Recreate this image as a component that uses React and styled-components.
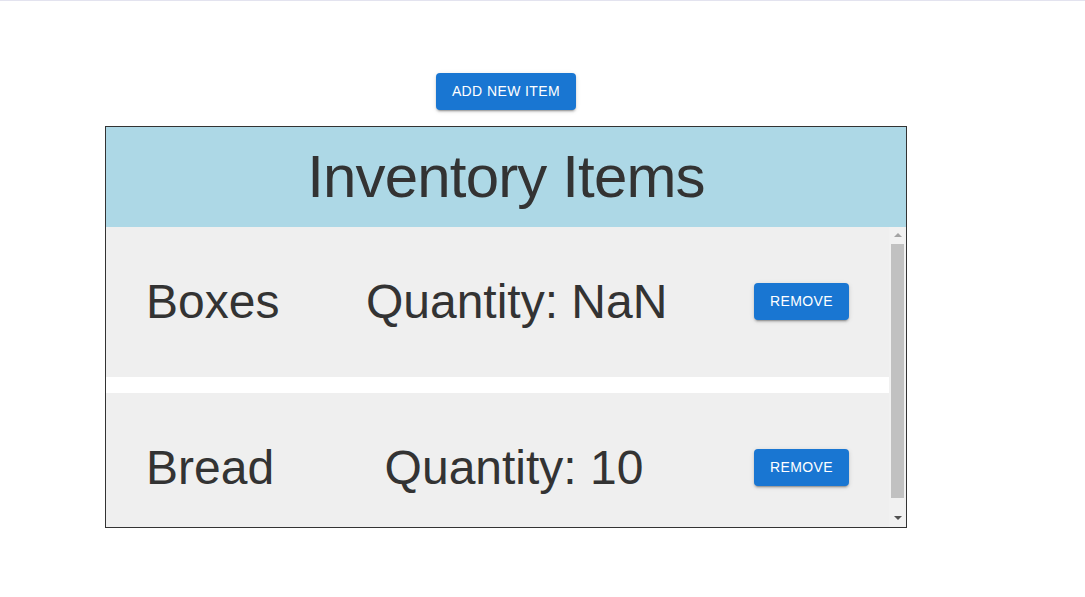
import React from 'react';
import styled, { createGlobalStyle } from 'styled-components';

const GlobalStyle = createGlobalStyle`
	body {
		margin: 0;
		background: #fff;
		font-family: "Liberation Sans", Arial, sans-serif;
	}
`;

const Page = styled.div`
	border-top: 1px solid #e3e3ef;
	padding-top: 72px;
	min-height: 596px;
	box-sizing: border-box;
`;

const Column = styled.div`
	width: 802px;
	margin-left: 105px;
	display: flex;
	flex-direction: column;
	align-items: center;
`;

const Button = styled.button`
	background: #1976d2;
	color: #fff;
	border: 0;
	border-radius: 4px;
	padding: 6px 16px;
	min-width: 64px;
	font-family: "Liberation Sans", Arial, sans-serif;
	font-size: 14px;
	line-height: 1.75;
	letter-spacing: 0.02857em;
	text-transform: uppercase;
	cursor: pointer;
	box-shadow: 0px 3px 1px -2px rgba(0, 0, 0, 0.2), 0px 2px 2px 0px rgba(0, 0, 0, 0.14),
		0px 1px 5px 0px rgba(0, 0, 0, 0.12);
`;

const AddButton = styled(Button)`
	margin-bottom: 16px;
`;

const Box = styled.div`
	width: 100%;
	height: 402px;
	border: 1px solid #333;
	box-sizing: border-box;
	display: flex;
	flex-direction: column;
`;

const Header = styled.div`
	height: 100px;
	flex-shrink: 0;
	background: #add8e6;
	color: #333;
	font-size: 60px;
	letter-spacing: -0.85px;
	display: flex;
	align-items: center;
	justify-content: center;
`;

const Body = styled.div`
	flex: 1;
	min-height: 0;
	display: flex;
`;

const List = styled.div`
	flex: 1;
	overflow: hidden;
	display: flex;
	flex-direction: column;
	gap: 16px;
`;

const Row = styled.div`
	flex-shrink: 0;
	height: 150px;
	background: #efefef;
	padding: 0 40px;
	display: flex;
	align-items: center;
	justify-content: space-between;
	color: #333;
	font-size: 48px;
`;

/* drawn scrollbar, classic windows look */
const ScrollBar = styled.div`
	width: 17px;
	flex-shrink: 0;
	background: #f1f1f1;
	display: flex;
	flex-direction: column;
`;

const Arrow = styled.div`
	height: 17px;
	flex-shrink: 0;
	display: flex;
	align-items: center;
	justify-content: center;

	&::before {
		content: '';
		border-left: 4px solid transparent;
		border-right: 4px solid transparent;
		${(p) =>
			p.$down
				? `border-top: 4px solid ${p.$color};`
				: `border-bottom: 4px solid ${p.$color};`}
	}
`;

const Track = styled.div`
	flex: 1;
	padding: 0 2px;
`;

const Thumb = styled.div`
	background: #c1c1c1;
`;

const items = [
	{ id: 1, name: 'Boxes', quantity: NaN },
	{ id: 2, name: 'Bread', quantity: 10 },
];

export default function App() {
	return (
		<>
			<GlobalStyle />
			<Page>
				<Column>
					<AddButton>Add new item</AddButton>
					<Box>
						<Header>Inventory Items</Header>
						<Body>
							<List>
								{items.map((item) => (
									<Row key={item.id}>
										<span>{item.name}</span>
										<span>Quantity: {String(item.quantity)}</span>
										<Button>Remove</Button>
									</Row>
								))}
							</List>
							<ScrollBar>
								<Arrow $color="#a3a3a3" />
								<Track>
									<Thumb style={{ height: '95.5%' }} />
								</Track>
								<Arrow $down $color="#505050" />
							</ScrollBar>
						</Body>
					</Box>
				</Column>
			</Page>
		</>
	);
}
